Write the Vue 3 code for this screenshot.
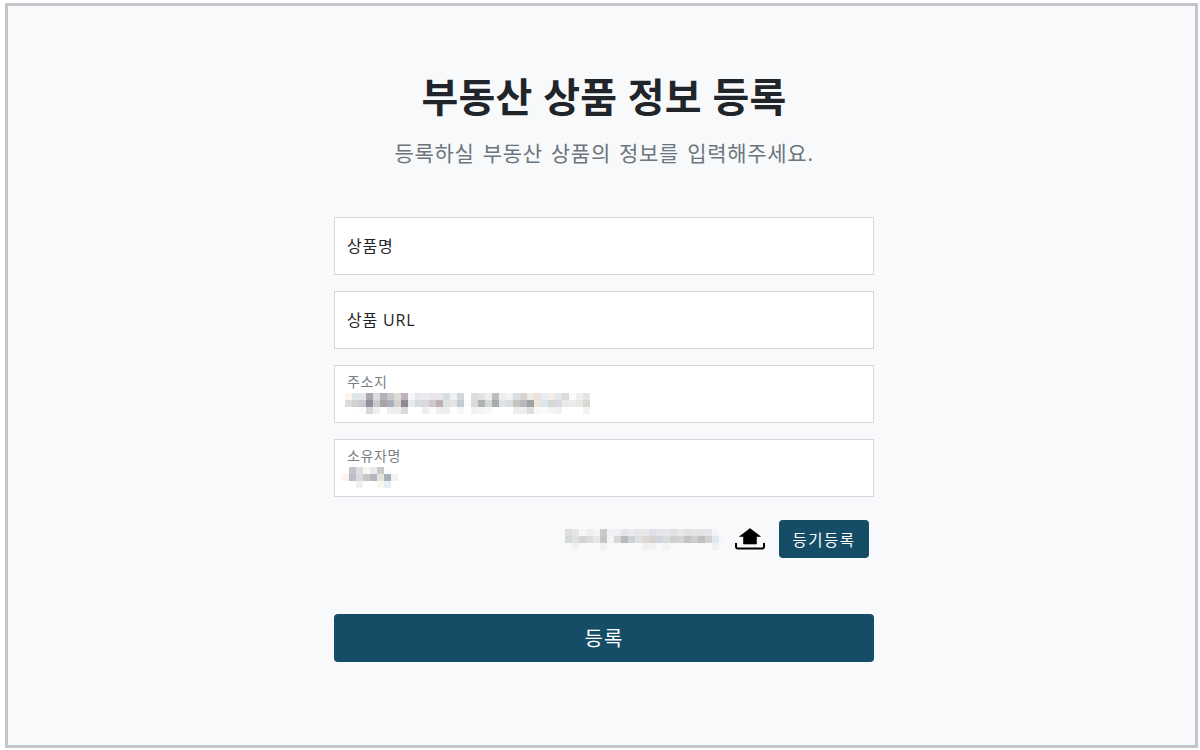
<script setup>
const fields = [
  { label: '상품명', value: '' },
  { label: '상품 URL', value: '' },
  {
    label: '주소지',
    value: 'x',
    offset: -2,
    rows: [
      ['#fbf5ee','#dfe6e8','#e8e4ec','#a9a8ae','#dcdde2','#b7b1b5','#c8c6ce','#dedcd6','#bcb2bf','#f7f7f8','#e6eaee','#ecebf0','#e8e6e6','#e8e8ea','#d8dde2','#eff1f0','#cfd7dc','#fff','#dddddd','#e2e2e0','#eeeeee','#bdbdbd','#eeeeee','#f7f2ed','#d9dfe6','#dad3cf','#eeeae6','#e9e2da','#e6edf6','#f3eee8','#e6e6ea','#dcd8dc','#fafafa','#f0f0f0','#e4e4e2'],
      ['#dcdcd8','#cfd2cc','#cbc8d4','#8f8f97','#c8cacf','#a9a5a5','#a9afbb','#d3d1ca','#8e8a98','#e6eaea','#d5dbe1','#dcd7de','#cbc9cd','#bdb0b5','#dfe2e4','#e4e4e2','#c3cad0','#fafbfc','#d8dad4','#b0b2b6','#d5d9da','#a9acad','#dfe3e6','#d9dee2','#c8c3bf','#b8b8ba','#9fa3a5','#eee8d8','#dbe7f0','#d7d7d6','#ddd9e0','#e8eaec','#ececec','#e8e8e6','#d8d8d4'],
      ['#fff','#fff','#fdfcf6','#d7d8de','#f0f0f3','#fff','#efedf1','#eeeeee','#d8dcd4','#fff','#fff','#eeeef2','#fafaf6','#f0eef0','#ecedef','#fff','#f6f6f6','#fff','#f2f2f0','#f5f5f3','#f8f8f8','#fff','#fff','#fff','#eeeeec','#eeeeec','#dedede','#f8f8f8','#fbfbfd','#f6f4f6','#f2f2f4','#fff','#fff','#fff','#f4f4f4'],
    ],
  },
  {
    label: '소유자명',
    value: 'x',
    offset: -5,
    rows: [
      ['#fff','#c3c3cc','#dedee6','#fbf8f2','#e9ebf0','#cbc9c9','#fbfcfe','#fff'],
      ['#fbf3ec','#bdbdc8','#dbd9e2','#c8c8c0','#b6b4c0','#e6e4dc','#a5b2bc','#eff1f3'],
      ['#fff','#fff','#f0eef0','#fff','#fff','#f8f8f2','#e8edf2','#fff'],
    ],
  },
]
const fileRows = [
  ['#dedede','#e4e6e8','#f6f6f6','#eeeeee','#f4f4f4','#c8cacc','#f2f2f4','#f0f0f2','#e4e4e8','#e8ebf0','#e6e6e8','#e8e8ea','#dcdfe6','#e4e6ea','#e8e8ec','#e2e2e2','#e8e8e8','#e2e2e4','#e4e4e6','#e2e2e4','#e6e6e8','#f4f4f8','#f8f9fa'],
  ['#d8d8d8','#dde2e6','#d4d4d4','#dddddd','#e8e8e8','#c2c4c8','#f4f4f4','#d8d8da','#b8bcc0','#cfd3d8','#e0e0e2','#dcd8d4','#d8d2cc','#cfd6de','#d8dce0','#cfd0d0','#d4d4d4','#c4c4c4','#cfcfcc','#c0c0c2','#d0d0ce','#e2e8f2','#f4f6fa'],
  ['#f8f9fa','#f2f2f2','#f8f9fa','#f8f9fa','#f8f9fa','#f2f2f4','#f8f9fa','#f8f9fa','#f8f9fa','#f8f9fa','#f8f9fa','#f0f0f0','#f2f2f2','#f8f9fa','#f2f2f2','#f8f9fa','#f8f9fa','#f8f9fa','#f8f9fa','#f8f9fa','#f8f9fa','#f0f0f2','#f8f9fa'],
]
</script>

<template>
  <div class="page">
    <div class="card">
      <h1 class="title">부동산 상품 정보 등록</h1>
      <p class="sub">등록하실 부동산 상품의 정보를 입력해주세요.</p>
      <form class="form" @submit.prevent>
        <div v-for="f in fields" :key="f.label" class="field" :class="{ filled: f.value }">
          <span class="label">{{ f.label }}</span>
          <div
            v-if="f.value"
            class="mosaic"
            :style="{ marginLeft: f.offset + 'px', gridTemplateColumns: `repeat(${f.rows[0].length}, 7px)` }"
          >
            <template v-for="(row, r) in f.rows" :key="r">
              <i v-for="(c, i) in row" :key="i" :style="{ background: c }"></i>
            </template>
          </div>
        </div>
        <div class="upload">
          <div class="mosaic file" :style="{ gridTemplateColumns: `repeat(${fileRows[0].length}, 7px)` }">
            <template v-for="(row, r) in fileRows" :key="r">
              <i v-for="(c, i) in row" :key="i" :style="{ background: c }"></i>
            </template>
          </div>
          <svg class="icon" width="32" height="24" viewBox="0 0 32 24">
            <path d="M16 1.5 L26.5 9.5 H22.5 V17 H9.5 V9.5 H5.5 Z" fill="#000" stroke="#000" stroke-width="0.6" stroke-linejoin="round" />
            <path d="M2 16 V19.5 Q2 21.5 4 21.5 H28 Q30 21.5 30 19.5 V16" fill="none" stroke="#000" stroke-width="2" />
          </svg>
          <button type="button" class="reg">등기등록</button>
        </div>
        <button type="submit" class="submit">등록</button>
      </form>
    </div>
  </div>
</template>

<style>
html, body { margin: 0; padding: 0; background: #fff; }
</style>

<style scoped>
.page {
  box-sizing: border-box;
  width: 1200px;
  height: 750px;
  padding: 3px 2px 2px 5px;
  background: #fff;
}
.card {
  box-sizing: border-box;
  height: 100%;
  border: 3px solid #c3c5ca;
  padding: 61px 0 0 5px;
  background: #f8f9fa;
  display: flex;
  flex-direction: column;
  align-items: center;
  font-family: "Open Sans", "Noto Sans CJK KR", sans-serif;
  color: #212529;
}
.title {
  margin: 0;
  font-size: 40px;
  line-height: 60px;
  font-weight: 700;
  letter-spacing: 0.2px;
  color: #212529;
}
.sub {
  margin: 11px 0 0;
  font-size: 21px;
  line-height: 30px;
  letter-spacing: 0.7px;
  word-spacing: 2px;
  color: #6c757d;
}
.form {
  width: 540px;
  margin-top: 49px;
  display: flex;
  flex-direction: column;
  gap: 16px;
}
.field {
  box-sizing: border-box;
  height: 58px;
  background: #fff;
  border: 1px solid #d4d6d9;
  padding: 0 12px;
  display: flex;
  flex-direction: column;
  justify-content: center;
}
.label {
  font-size: 16px;
  line-height: 21px;
  letter-spacing: 0.8px;
  color: #212529;
}
.filled { justify-content: flex-start; padding-top: 7px; }
.filled .label {
  font-size: 14px;
  line-height: 18px;
  letter-spacing: 0.6px;
  color: #7a7f85;
}
.mosaic {
  display: grid;
  grid-template-rows: repeat(3, 7px);
  height: 21px;
  margin-top: 2px;
  width: max-content;
}
.mosaic i { display: block; }
.upload {
  display: flex;
  align-items: center;
  justify-content: flex-end;
  padding-right: 5px;
  margin-top: 7px;
  height: 38px;
}
.file {
  margin: 0 8px 0 0;
}
.icon { margin-right: 13px; }
.reg {
  width: 90px;
  height: 38px;
  border: 0;
  border-radius: 4px;
  background: #154c66;
  color: #fff;
  font: inherit;
  font-size: 15.5px;
  letter-spacing: 1.5px;
  padding: 0;
}
.submit {
  margin-top: 40px;
  height: 48px;
  border: 0;
  border-radius: 4px;
  background: #154c66;
  color: #fff;
  font: inherit;
  font-size: 20px;
  letter-spacing: 1px;
  padding: 0 0 2px;
}
</style>
